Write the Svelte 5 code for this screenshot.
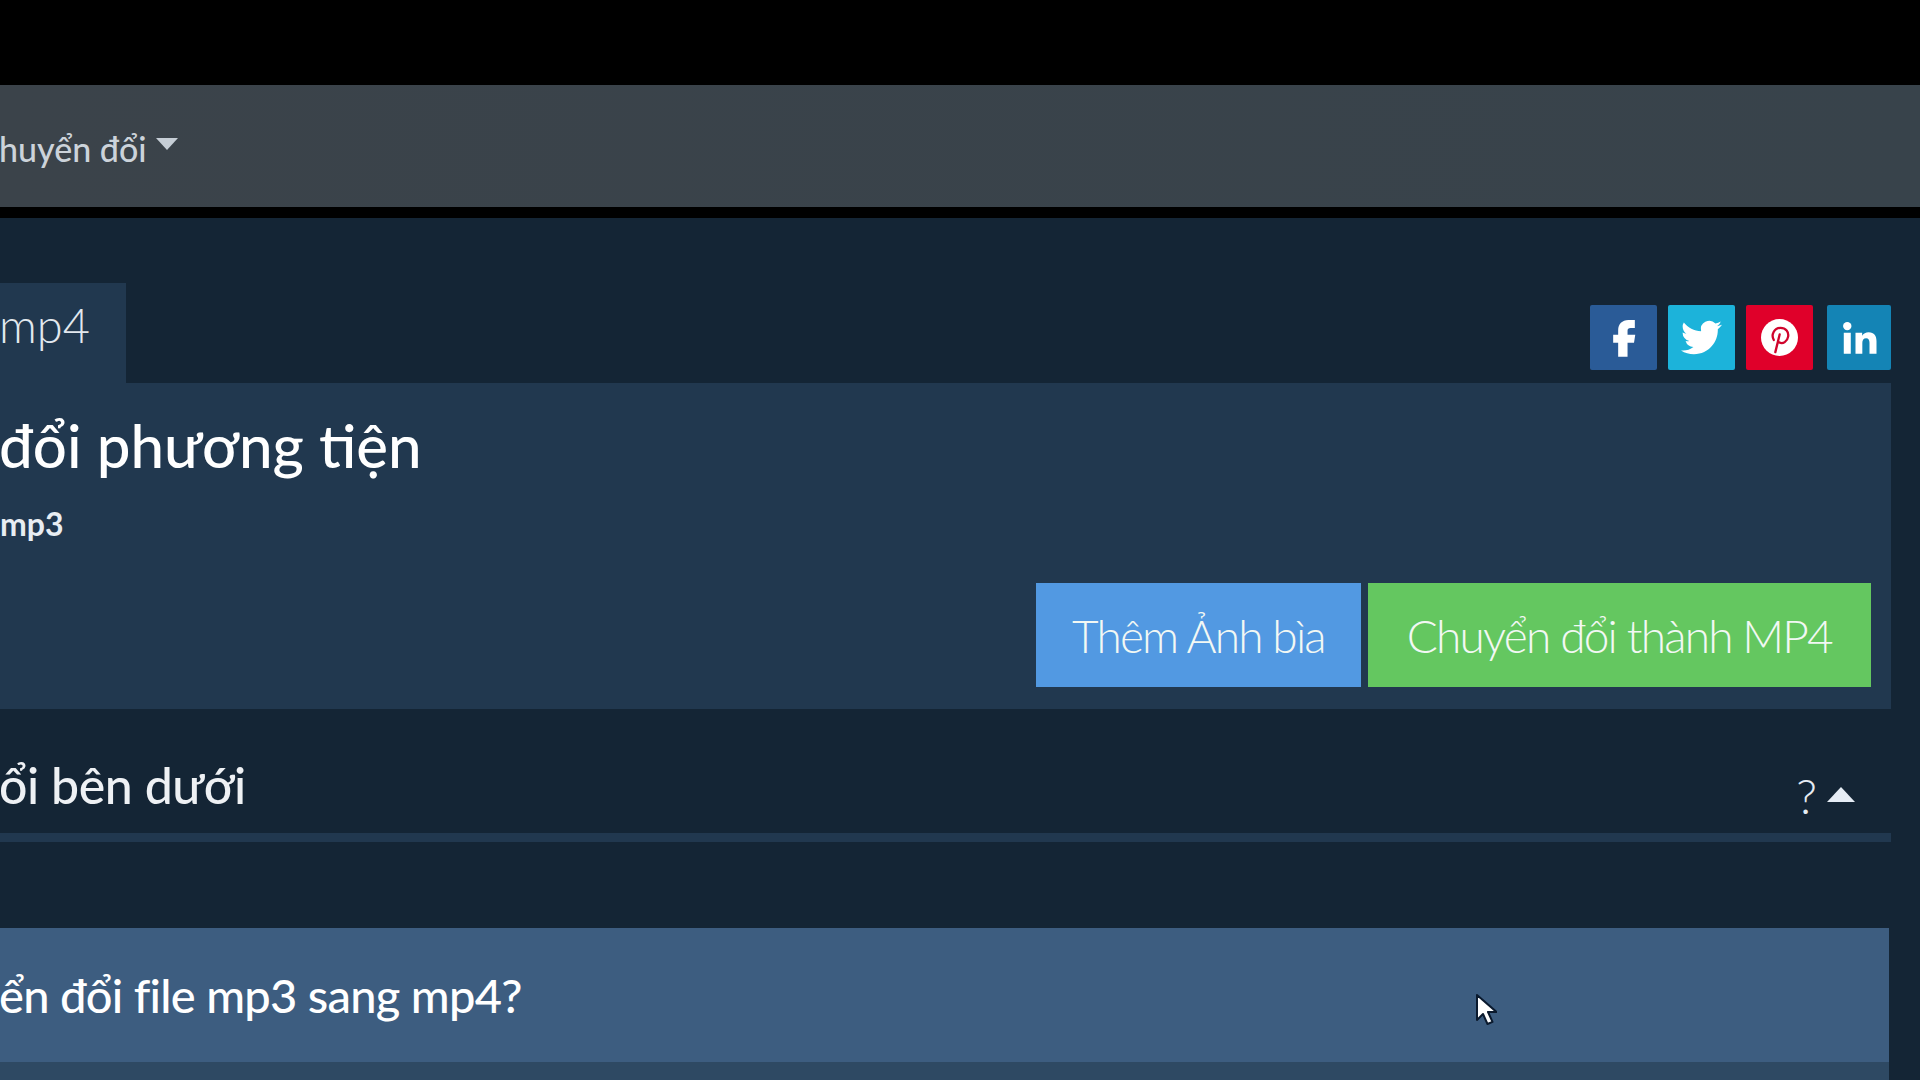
<script>
  const socials = ['fb', 'tw', 'pin', 'li']
</script>

<div class="page">
  <div class="topbar"></div>

  <nav>
    <a href="/" class="nav-link">huyển đổi</a>
    <span class="caret"></span>
  </nav>

  <main>
    <div class="tabs">
      <div class="tab">mp4</div>
      <div class="social">
        {#each socials as s}
          <a href="/" class="share {s}" aria-label={s}>
            {#if s === 'fb'}
              <svg viewBox="0 1 24 24" width="50" height="50"><path d="M14.2 8.2h3V4.300h-3.100c-3 0-4.900 2-4.900 4.900v2.200H6.800v3.900h2.400V22h4.500v-6.700h3.100l.6-3.900h-3.700V9.500c0-.9.400-1.300 1.500-1.300z"/></svg>
            {:else if s === 'tw'}
              <svg viewBox="0 0 24 24" width="41" height="41"><path d="M23.953 4.57a10 10 0 01-2.825.775 4.958 4.958 0 002.163-2.723c-.951.555-2.005.959-3.127 1.184a4.92 4.92 0 00-8.384 4.482C7.69 8.095 4.067 6.13 1.64 3.162a4.822 4.822 0 00-.666 2.475c0 1.71.87 3.213 2.188 4.096a4.904 4.904 0 01-2.228-.616v.06a4.923 4.923 0 003.946 4.827 4.996 4.996 0 01-2.212.085 4.936 4.936 0 004.604 3.417 9.867 9.867 0 01-6.102 2.105c-.39 0-.779-.023-1.17-.067a13.995 13.995 0 007.557 2.209c9.053 0 13.998-7.496 13.998-13.985 0-.21 0-.42-.015-.63A9.935 9.935 0 0024 4.59z"/></svg>
            {:else if s === 'pin'}
              <svg viewBox="0 0 24 24" width="37" height="37"><circle cx="12" cy="12" r="12"/><path class="pin-p" d="M9.300 21.500 12.100 10M8.300 13.600C6.300 10.200 8.600 5.800 12.600 5.800c3.600 0 5.500 2.700 5 5.600-.5 3.100-3.400 5.300-5.900 3.700"/></svg>
            {:else}
              <svg viewBox="0 0 24 24" width="42" height="42"><circle cx="5.300" cy="5.200" r="2.400"/><rect x="3.300" y="9" width="4" height="12"/><path d="M10 9h3.800v1.700c.7-1.200 2.100-2 3.700-2 3.200 0 4.500 2 4.500 5.200V21h-4v-6.300c0-1.600-.6-2.600-1.900-2.600-1.500 0-2.200 1-2.200 2.700V21H10z"/></svg>
            {/if}
          </a>
        {/each}
      </div>
    </div>

    <section class="panel">
      <h1>đổi phương tiện</h1>
      <p class="sub">mp3</p>
      <div class="actions">
        <button class="blue">Thêm Ảnh bìa</button>
        <button class="green">Chuyển đổi thành MP4</button>
      </div>
    </section>

    <div class="section-head">
      <h2>ổi bên dưới</h2>
      <div class="help">
        <span class="q">?</span>
        <span class="up"></span>
      </div>
    </div>

    <div class="faq">
      <h3>ển đổi file mp3 sang mp4?</h3>
    </div>
    <div class="faq-body"></div>
  </main>

  <svg class="cursor" viewBox="0 0 22 34" width="22" height="34">
    <path d="M2 2v25l6-6 4.500 10 5-2.200-4.500-9.800h8.500z" fill="#fff" stroke="#0b1a2e" stroke-width="2" stroke-linejoin="round"/>
  </svg>
</div>

<style>
  :global(body) {
    background: #000;
  }
  .page {
    position: relative;
    width: 1920px;
    height: 1080px;
    overflow: hidden;
    display: flex;
    flex-direction: column;
    background: #000;
    font-family: Lato, "Open Sans", sans-serif;
    color: #fff;
  }
  .topbar {
    height: 85px;
    flex: none;
  }
  nav {
    height: 122px;
    flex: none;
    display: flex;
    align-items: center;
    gap: 9px;
    background: linear-gradient(90deg, #3b434a, #38434b);
    margin-bottom: 11px;
  }
  .nav-link {
    color: #ccd3da;
    font-size: 34px;
    font-weight: 500;
    text-decoration: none;
    margin-left: -1px;
    position: relative;
    top: 2px;
  }
  .caret {
    border-left: 11px solid transparent;
    border-right: 11px solid transparent;
    border-top: 12px solid #c6ced6;
    margin-top: -4px;
  }
  main {
    flex: 1;
    background: #142535;
    padding: 65px 29px 0 0;
    display: flex;
    flex-direction: column;
  }
  .tabs {
    height: 100px;
    flex: none;
    display: flex;
    justify-content: space-between;
  }
  .tab {
    width: 127px;
    background: #21384f;
    font-size: 47px;
    font-weight: 300;
    line-height: 1;
    padding-top: 19px;
    margin-left: -1px;
    box-sizing: border-box;
    color: #e2e8ee;
  }
  .social {
    display: flex;
    gap: 11px;
    padding-top: 22px;
    height: 65px;
  }
  .share {
    width: 67px;
    height: 65px;
    display: flex;
    align-items: center;
    justify-content: center;
    border-radius: 2px;
  }
  .share svg {
    fill: #fff;
  }
  .fb { background: #2a5b97; }
  .tw { background: #1cb3da; }
  .pin { background: #e0002a; }
  .li {
    background: #1484b5;
    width: 64px;
    margin-left: 3px;
  }
  .pin-p {
    fill: none;
    stroke: #d0042c;
    stroke-width: 1.5;
    stroke-linecap: round;
  }
  .panel {
    height: 326px;
    flex: none;
    background: #21384f;
    box-sizing: border-box;
    padding-top: 24px;
    display: flex;
    flex-direction: column;
  }
  h1 {
    margin: 0 0 0 -1px;
    font-size: 60px;
    font-weight: 500;
    line-height: 76px;
  }
  .sub {
    margin: 21px 0 0;
    font-size: 32px;
    font-weight: 700;
    line-height: 40px;
    color: #e8edf2;
  }
  .actions {
    display: flex;
    justify-content: flex-end;
    gap: 7px;
    padding-right: 20px;
    margin-top: 39px;
  }
  button {
    height: 104px;
    border: 0;
    color: #f2f8f4;
    font-family: inherit;
    font-size: 46px;
    font-weight: 300;
    letter-spacing: -1.8px;
    padding: 0 38px;
  }
  .blue {
    background: #5299e2;
    padding: 0 36px;
  }
  .green {
    background: #64c760;
    padding: 0 39px;
  }
  .section-head {
    height: 133px;
    flex: none;
    box-sizing: border-box;
    border-bottom: 9px solid #21384f;
    display: flex;
    justify-content: space-between;
    align-items: center;
    padding-top: 28px;
  }
  h2 {
    margin: 0 0 0 -1px;
    font-size: 50px;
    font-weight: 500;
    letter-spacing: -0.4px;
    color: #eef1f4;
  }
  .help {
    display: flex;
    align-items: center;
    gap: 10px;
    padding-right: 36px;
    padding-top: 22px;
  }
  .q {
    font-size: 48px;
    font-weight: 300;
    line-height: 1;
    color: #e6ecf2;
  }
  .up {
    border-left: 14px solid transparent;
    border-right: 14px solid transparent;
    border-bottom: 15px solid #e6edf5;
    margin-top: -4px;
  }
  .faq {
    margin-top: 86px;
    margin-right: 2px;
    height: 134px;
    flex: none;
    background: #3d5d80;
    display: flex;
    align-items: center;
  }
  h3 {
    margin: 0 0 0 -1px;
    font-size: 47px;
    font-weight: 500;
    letter-spacing: -0.7px;
  }
  .faq-body {
    flex: 1;
    margin-right: 2px;
    background: #2e4963;
  }
  .cursor {
    position: absolute;
    left: 1475px;
    top: 993px;
  }
</style>
